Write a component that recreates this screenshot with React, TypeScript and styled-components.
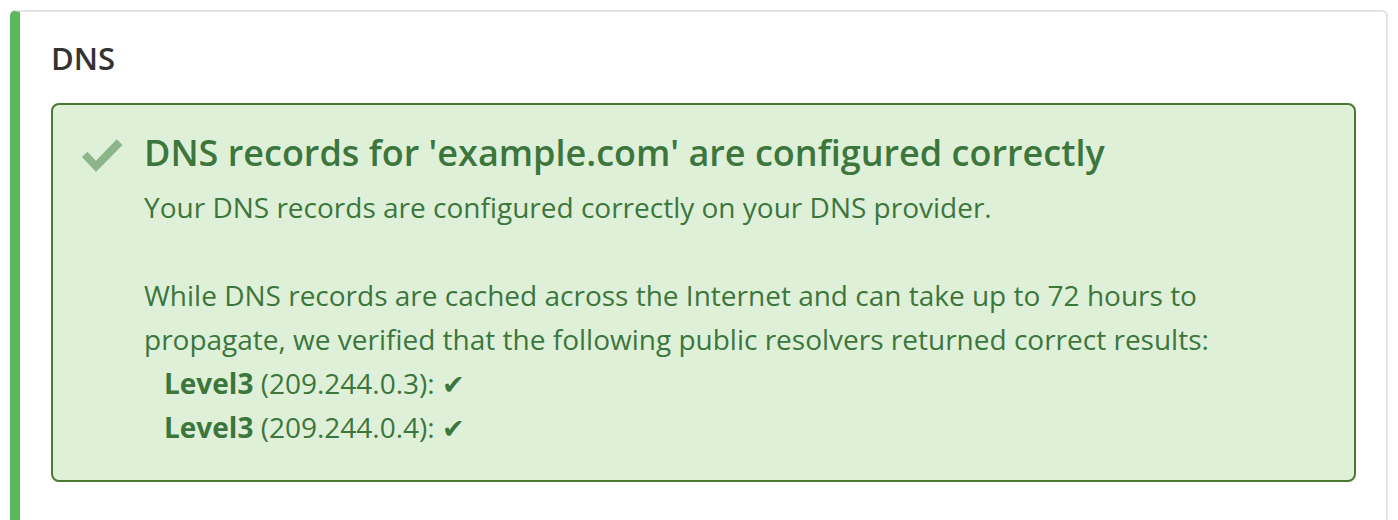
import React from "react";
import styled, { createGlobalStyle } from "styled-components";

const Global = createGlobalStyle`
  html, body { margin: 0; padding: 0; background: #ffffff; }
  body { font-family: "Open Sans", "Liberation Sans", sans-serif; }
`;

const Page = styled.div`
  padding: 10px 10px 0 10px;
  height: 510px;
  overflow: hidden;
`;

const Card = styled.section`
  border: 2px solid #e3e3e3;
  border-left: 10px solid #5cb85c;
  border-bottom: none;
  border-radius: 6px 6px 0 0;
  padding: 0 30px 60px 31px;
  min-height: 560px;
`;

const CardTitle = styled.h3`
  margin: 26px 0 0;
  font-size: 31px;
  line-height: 40px;
  font-weight: 600;
  color: #333333;
`;

const Alert = styled.div`
  margin-top: 25px;
  display: flex;
  align-items: flex-start;
  gap: 21px;
  padding: 24px 30px 31px 29px;
  background: #dff0d8;
  border: 2px solid #4a7a2f;
  border-radius: 8px;
  color: #3c763d;
`;

const Icon = styled.svg`
  flex: none;
  width: 41px;
  height: 34px;
  margin-top: 10px;
`;

const AlertBody = styled.div`
  flex: 1;
`;

const AlertTitle = styled.h4`
  margin: 0 0 8px;
  font-size: 36px;
  line-height: 48px;
  font-weight: 600;
`;

const Text = styled.div`
  font-size: 28px;
  line-height: 44px;
`;

const Resolver = styled.div`
  padding-left: 20px;
  height: 44px;
`;

const Name = styled.strong`
  font-weight: 700;
`;

const Tick = styled.span`
  display: inline-block;
  font-family: "DejaVu Sans", sans-serif;
  font-size: 27px;
  line-height: 1;
  vertical-align: baseline;
`;

const resolvers = [
  { name: "Level3", ip: "209.244.0.3" },
  { name: "Level3", ip: "209.244.0.4" },
];

export default function App() {
  return (
    <>
      <Global />
      <Page>
        <Card>
          <CardTitle>DNS</CardTitle>
          <Alert>
            <Icon viewBox="0 0 41 34">
              <polygon
                points="0,18 5.3,12.7 14,21.7 34.7,0.3 40.5,6 14,33"
                fill="#8db58a"
              />
            </Icon>
            <AlertBody>
              <AlertTitle>DNS records for 'example.com' are configured correctly</AlertTitle>
              <Text>
                Your DNS records are configured correctly on your DNS provider.
                <br />
                <br />
                While DNS records are cached across the Internet and can take up to 72 hours to
                propagate, we verified that the following public resolvers returned correct results:
                {resolvers.map((r) => (
                  <Resolver key={r.ip}>
                    <Name>{r.name}</Name> ({r.ip}): <Tick>✔</Tick>
                  </Resolver>
                ))}
              </Text>
            </AlertBody>
          </Alert>
        </Card>
      </Page>
    </>
  );
}
